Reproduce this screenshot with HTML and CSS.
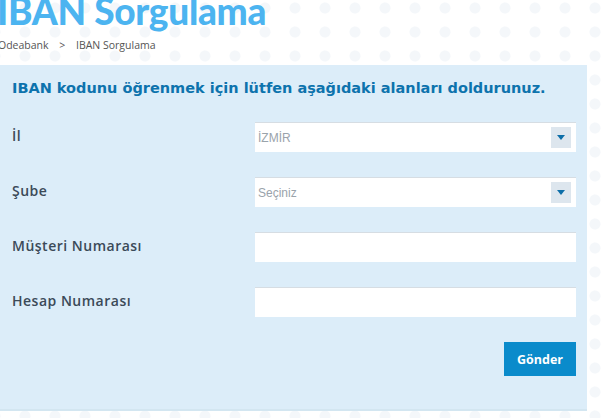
FILE: index.html
```html
<!DOCTYPE html>
<html lang="tr">
<head>
  <meta charset="UTF-8">
  <title>IBAN Sorgulama</title>
  <link rel="stylesheet" href="styles.css">
</head>
<body>
  <header class="page-head">
    <h1 class="page-title">IBAN Sorgulama</h1>
    <div class="breadcrumb">Odeabank <span class="sep">&gt;</span> IBAN Sorgulama</div>
  </header>
  <div class="panel">
    <h2 class="intro">IBAN kodunu öğrenmek için lütfen aşağıdaki alanları doldurunuz.</h2>
    <form class="iban-form">
      <label class="field-label">İl</label>
      <div class="select">
        <span class="select-value">İZMİR</span>
        <span class="select-btn"><span class="caret"></span></span>
      </div>
      <label class="field-label">Şube</label>
      <div class="select">
        <span class="select-value">Seçiniz</span>
        <span class="select-btn"><span class="caret"></span></span>
      </div>
      <label class="field-label">Müşteri Numarası</label>
      <input class="text-input" type="text">
      <label class="field-label">Hesap Numarası</label>
      <input class="text-input" type="text">
      <div class="actions">
        <button type="button" class="submit">Gönder</button>
      </div>
    </form>
  </div>
</body>
</html>
```

FILE: styles.css
```css
body {
  margin: 0;
  width: 605px;
  height: 418px;
  overflow: hidden;
  background-color: #fff;
  background-image: radial-gradient(circle, #f4f7fa 5px, transparent 6px);
  background-size: 30px 24px;
  background-position: 10px -4px;
  font-family: "Open Sans", "Liberation Sans", sans-serif;
}
.page-head {
  display: flow-root;
  height: 65px;
}
.page-title {
  margin: -10px 0 0 -3px;
  font-family: Lato, "Open Sans", sans-serif;
  font-weight: 900;
  font-size: 37px;
  line-height: 42px;
  color: #4cb4f0;
  letter-spacing: -0.3px;
}
.breadcrumb {
  margin: 6px 0 0 -2px;
  font-size: 10.5px;
  color: #555;
}
.breadcrumb .sep {
  margin: 0 8px;
}
.panel {
  width: 587px;
  height: 346px;
  box-sizing: border-box;
  background: #dcedf9;
  border-bottom: 2px solid #d3e6f1;
  padding: 13px 11px 0 12px;
}
.intro {
  margin: 0;
  font-family: "DejaVu Sans", Verdana, sans-serif;
  font-weight: 700;
  font-size: 14.5px;
  color: #0d73ad;
  line-height: 20px;
}
.iban-form {
  margin-top: 24px;
  display: grid;
  grid-template-columns: 243px 321px;
  grid-auto-rows: 30px;
  row-gap: 25px;
  align-items: center;
}
.field-label {
  font-size: 14px;
  font-weight: 600;
  letter-spacing: 0.5px;
  color: #3b4a58;
  align-self: start;
  margin-top: 4px;
}
.select, .text-input {
  height: 30px;
  box-sizing: border-box;
  background: #fff;
  border: none;
  border-top: 1px solid #d6dde3;
}
.select {
  display: flex;
  align-items: center;
  justify-content: space-between;
  padding: 0 5px 0 3px;
}
.select-value {
  font-family: "Liberation Sans", Arial, sans-serif;
  font-size: 12px;
  color: #9aa3ab;
}
.select-btn {
  width: 20px;
  height: 21px;
  background: #dde6ee;
  display: flex;
  align-items: center;
  justify-content: center;
}
.caret {
  width: 0;
  height: 0;
  border-left: 4px solid transparent;
  border-right: 4px solid transparent;
  border-top: 5px solid #0d6ea8;
}
.text-input {
  width: 100%;
  margin: 0;
}
.actions {
  grid-column: 2;
  display: flex;
  justify-content: flex-end;
  margin-top: 4px;
}
.submit {
  width: 72px;
  height: 34px;
  background: #0a8bcb;
  color: #fff;
  border: none;
  font-family: "Open Sans", sans-serif;
  font-weight: 700;
  font-size: 12.5px;
  padding: 0;
}
```
